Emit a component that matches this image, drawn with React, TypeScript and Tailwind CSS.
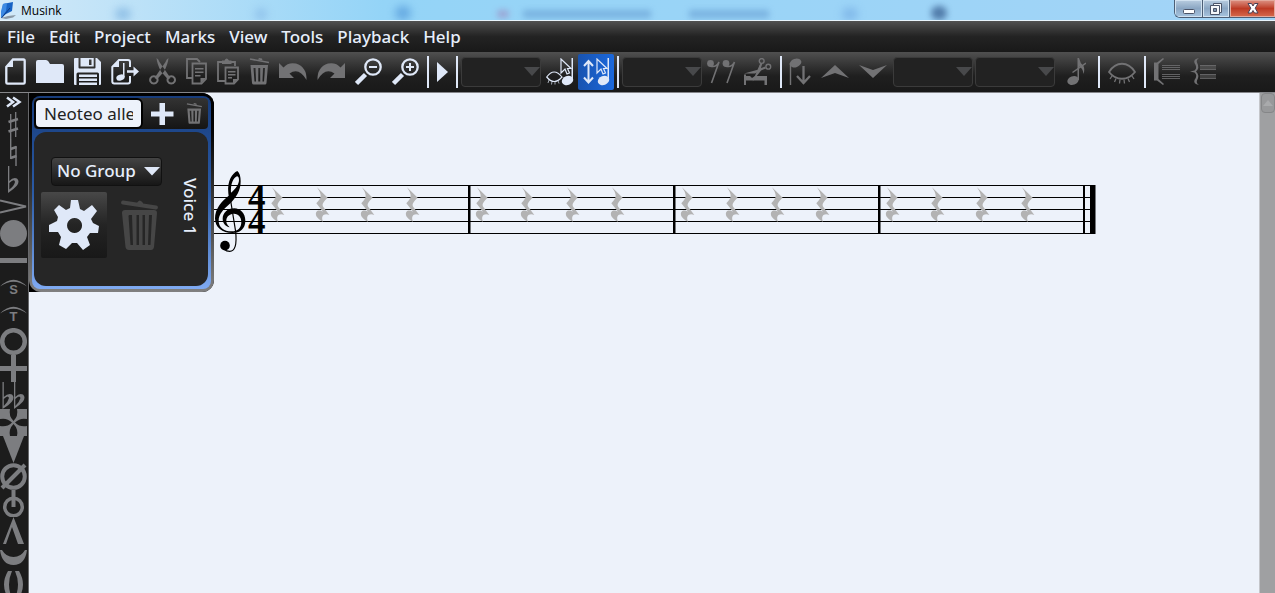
import { useState } from "react";
import type { ReactNode } from "react";
import clsx from "clsx";

const MENUS = ["File", "Edit", "Project", "Marks", "View", "Tools", "Playback", "Help"];

const REST_STARTS = [270, 475, 680, 885];
const REST_OFFSETS = [0, 45, 90, 135];
const STAFF_LINES = [185, 197, 209, 221, 233];

type ToolButtonProps = {
  label: string;
  width: number;
  disabled?: boolean;
  children: ReactNode;
};

const ToolButton = ({ label, width, disabled, children }: ToolButtonProps) => (
  <button
    type="button"
    aria-label={label}
    disabled={disabled}
    className={clsx("shrink-0", disabled ? "text-[#727274]" : "text-[#dfe8f8]")}
  >
    <svg width={width} height="28" viewBox={`0 0 ${width} 28`} fill="currentColor">
      {children}
    </svg>
  </button>
);

const Separator = ({ className }: { className?: string }) => (
  <span className={clsx("h-8 w-0.5 shrink-0 bg-[#dfe8f8]", className)} />
);

const ToolSelect = ({ label }: { label: string }) => (
  <div className="relative h-[30px] w-20 shrink-0">
    <select
      aria-label={label}
      disabled
      className="h-full w-full appearance-none rounded-sm border border-[#3b3b3b] bg-[#222222]"
    />
    <svg
      width="16"
      height="10"
      viewBox="0 0 16 10"
      className="pointer-events-none absolute top-2.5 right-px fill-[#48494b]"
    >
      <path d="M0 0H16L8 9Z" />
    </svg>
  </div>
);

const TrashShape = () => (
  <>
    <path d="M1 1L20 4.500" stroke="currentColor" strokeWidth="1.600" fill="none" />
    <path d="M9 1.500l1-1.500 3 .5 .5 2z" />
    <path
      fillRule="evenodd"
      d="M1.500 7H19L17.500 25Q17.300 26.500 16 26.500H4.700Q3.200 26.500 3 25ZM4.500 10L5.500 23.500H7L6.500 10ZM9.300 10V23.500H11.200V10ZM14 10L13.500 23.500H15L16 10Z"
    />
  </>
);

const CursorNote = () => (
  <>
    <path d="M1 1V15L5 11L7 16L9.500 15L7.500 10.500H11Z" fill="none" stroke="currentColor" strokeWidth="1.200" />
    <path d="M11.500 0h1.500v22h-1.500z" />
    <ellipse cx="7.500" cy="22.500" rx="5.800" ry="4.500" transform="rotate(-20 7.500 22.500)" />
  </>
);

const Lashes = () => (
  <>
    <path d="M1 14C8 3 20 3 27 14C20 23 8 23 1 14Z" fill="none" stroke="currentColor" strokeWidth="1.800" />
    <path
      d="M4 18L2 21M8 20.500L6.500 24M12 21.500L11.500 25.500M16 21.500L16.500 25.500M20 20.500L21.500 24M24 18L26 21"
      fill="none"
      stroke="currentColor"
      strokeWidth="1.300"
    />
  </>
);

const TitleBar = () => (
  <header className="relative flex h-[21px] shrink-0 items-start justify-between overflow-hidden border-b border-[#e8f4fc] bg-gradient-to-r from-[#d2e9f8] via-[#94d4f7] via-30% to-[#a3d4f7]">
    <div aria-hidden="true" className="absolute inset-0">
      <span className="absolute top-2 left-[9%] h-3 w-4 rounded-full bg-[#6fa8da] opacity-60 blur-[4px]" />
      <span className="absolute top-2 left-[20%] h-3 w-3 rounded-full bg-[#76a8de] opacity-50 blur-[4px]" />
      <span className="absolute top-1.5 left-[31%] h-3.5 w-4 rounded-full bg-[#5197d8] opacity-70 blur-[4px]" />
      <span className="absolute top-2.5 left-[39%] h-2 w-3 rounded-full bg-[#9d8fc4] opacity-70 blur-[3px]" />
      <span className="absolute top-2.5 left-[41%] h-2 w-32 bg-[#6ba3d6] opacity-70 blur-[3px]" />
      <span className="absolute top-2.5 left-[54%] h-2 w-20 bg-[#6ba3d6] opacity-70 blur-[3px]" />
      <span className="absolute top-2 left-[66%] h-3 w-4 rounded-full bg-[#6da5e0] opacity-60 blur-[4px]" />
      <span className="absolute top-1.5 left-[73%] h-3.5 w-4 rounded-full bg-[#3f6798] opacity-80 blur-[3px]" />
    </div>
    <div className="relative flex items-center gap-[5px] pt-0.5">
      <svg width="16" height="17" viewBox="0 0 16 17">
        <path d="M1 16L8 14L16 13L13 15.500L6 17Z" fill="#8b9aa7" />
        <path d="M3 2L13 0L12 9L6 12L1 16Z" fill="#1763c5" />
        <path d="M3 2L7 1L6 9L1 16L1 9Z" fill="#3c8ae4" />
        <path d="M1.500 16L10 6" stroke="#0b3c85" strokeWidth="1" />
      </svg>
      <h1 className="font-['Open_Sans','Noto_Sans',sans-serif] text-xs leading-4 text-black">Musink</h1>
    </div>
    <div className="relative flex h-[18px] overflow-hidden rounded-bl-md border-b border-l border-[#4c5e75]">
      <button
        type="button"
        aria-label="Minimize"
        className="flex w-7 items-center justify-center border-r border-[#4c5e75] bg-gradient-to-b from-[#b9cde0] via-[#8ba6c3] to-[#a7c4df] shadow-[inset_0_0_0_1px_#d2e2f0]"
      >
        <svg width="14" height="16" viewBox="0 0 14 16">
          <rect x="1.500" y="8.500" width="11" height="4" rx="1" fill="#fff" stroke="#4b5468" />
        </svg>
      </button>
      <button
        type="button"
        aria-label="Restore"
        className="flex w-[27px] items-center justify-center border-r border-[#4c5e75] bg-gradient-to-b from-[#b9cde0] via-[#8ba6c3] to-[#a7c4df] shadow-[inset_0_0_0_1px_#d2e2f0]"
      >
        <svg width="14" height="14" viewBox="0 0 14 14" fill="#f5f7fa" stroke="#4b5468">
          <path d="M4.500 1.500H12.500V10.500H4.500Z" />
          <path d="M1.500 3.500H10.500V12.500H1.500Z" />
          <path d="M4.500 6.500H7.500V9.500H4.500Z" fill="#8196af" />
        </svg>
      </button>
      <button
        type="button"
        aria-label="Close"
        className="flex w-[45px] items-center justify-center bg-gradient-to-b from-[#dc9183] via-[#bd3a24] to-[#d66a4d] shadow-[inset_0_0_0_1px_#e3a99c]"
      >
        <svg width="14" height="13" viewBox="0 0 14 13">
          <path
            d="M2 1.500H5.500L7 4L8.500 1.500H12L9.200 6.200L12 11H8.500L7 8.500L5.500 11H2L4.800 6.200Z"
            fill="#fff"
            stroke="#4b4256"
          />
        </svg>
      </button>
    </div>
  </header>
);

const MenuBar = () => (
  <nav className="h-[31px] shrink-0 bg-gradient-to-b from-[#515151] via-[#232323] via-50% to-[#191919]">
    <ul className="flex h-full items-center gap-3.5 pl-[7px]">
      {MENUS.map((item) => (
        <li key={item}>
          <button type="button" className="block text-[17px] leading-6 font-medium">
            {item}
          </button>
        </li>
      ))}
    </ul>
  </nav>
);

const Toolbar = () => (
  <div
    role="toolbar"
    aria-label="Main tools"
    className="flex h-[41px] shrink-0 items-center overflow-hidden border-b border-[#85868a] bg-gradient-to-b from-[#505050] via-[#1f1f1f] via-60% to-[#191919] pl-[5px]"
  >
    <div className="flex shrink-0 items-center gap-2.5">
      <ToolButton label="New" width={21}>
        <path d="M8 1.500H18.500Q19.700 1.500 19.700 3V24.500Q19.700 25.700 18.500 25.700H2.500Q1.300 25.700 1.300 24.500V9Z" fill="none" stroke="currentColor" strokeWidth="2.300" />
        <path d="M8 1V9H1Z" />
      </ToolButton>
      <ToolButton label="Open" width={28}>
        <path d="M0 4Q0 2 2 2H10Q11.500 2 12.500 3.500L14 6H26Q28 6 28 8V25H0Z" />
      </ToolButton>
      <ToolButton label="Save" width={27}>
        <path
          fillRule="evenodd"
          d="M1 0H4.500V9.500Q4.500 10.500 5.500 10.500H20.500Q21.500 10.500 21.500 9.500V0H23L27 4V26Q27 27 26 27H25V16Q25 14.500 23.500 14.500H4Q2.500 14.500 2.500 16V27H1Q0 27 0 26V1Q0 0 1 0ZM6.500 0H19.700V8.500H6.500ZM15 1.500V7H17.500V1.500Z"
        />
        <path d="M5 16.500H23V19H5ZM5 20.500H23V23H5ZM5 24.500H23V27H5Z" />
      </ToolButton>
      <ToolButton label="Export" width={28}>
        <path d="M19 9V4Q19 2 17 2H8L1.300 9V23.500Q1.300 25.500 3.300 25.500H17Q19 25.500 19 23.500V18" fill="none" stroke="currentColor" strokeWidth="2" />
        <path d="M1 9L8 1.500V9Z" />
        <path d="M12 5H13.500V19H12Z" />
        <ellipse cx="9.500" cy="19.500" rx="4.300" ry="3" transform="rotate(-20 9.500 19.500)" />
        <path d="M16 12.300H22.500V8.500L28 13.500L22.500 18.500V14.800H16Z" />
      </ToolButton>
      <ToolButton label="Cut" width={27} disabled>
        <path d="M7.500 0Q9.500 1 10.500 4L21.500 20L19 21.500L12 13.500Q8 6 7.500 0ZM19.500 0Q17.500 1 16.500 4L5.500 20L8 21.500L15 13.500Q19 6 19.500 0Z" />
        <path d="M4.800 18.200a3.700 3.700 0 1 0 .1 0ZM22.200 18.200a3.700 3.700 0 1 0 .1 0Z" fill="none" stroke="currentColor" strokeWidth="2" />
      </ToolButton>
      <ToolButton label="Copy" width={21} disabled>
        <path d="M6 20H1V1H11L14 4" fill="none" stroke="currentColor" strokeWidth="1.800" />
        <path d="M6.500 5.500H20V21L15.500 25.500H6.500Z" fill="none" stroke="currentColor" strokeWidth="1.800" />
        <path d="M9 10H17.500V11.500H9ZM9 13.500H17.500V15H9ZM9 17H14.500V18.500H9ZM14.500 20H20L14.500 25.500Z" />
      </ToolButton>
      <ToolButton label="Paste" width={22} disabled>
        <path d="M8 23H1V4H18V8" fill="none" stroke="currentColor" strokeWidth="1.800" />
        <path d="M5 2.500H7.500Q9.500-1.500 12 2.500H14.500V6H5Z" />
        <path d="M8.500 9.500H21V21.500L17 25.500H8.500Z" fill="none" stroke="currentColor" strokeWidth="1.800" />
        <path d="M11 13H18.500V14.500H11ZM11 16H18.500V17.500H11ZM11 19H15V20.500H11ZM16 21H21L16 25.500Z" />
      </ToolButton>
      <ToolButton label="Delete" width={20} disabled>
        <TrashShape />
      </ToolButton>
      <ToolButton label="Undo" width={28} disabled>
        <path d="M0 5V20H15L10.500 15.500Q20 9 27.500 22Q28 9 17 5.500Q9 4 4.500 9.500Z" />
      </ToolButton>
      <ToolButton label="Redo" width={28} disabled>
        <path d="M28 5V20H13L17.500 15.500Q8 9 .5 22Q0 9 11 5.500Q19 4 23.500 9.500Z" />
      </ToolButton>
      <ToolButton label="Zoom out" width={27}>
        <circle cx="18" cy="9" r="7.700" fill="none" stroke="currentColor" strokeWidth="2.300" />
        <path d="M14 8H22V10H14Z" />
        <path d="M1.500 25.500L10.500 16.500" stroke="currentColor" strokeWidth="4.500" />
      </ToolButton>
      <ToolButton label="Zoom in" width={27}>
        <circle cx="18" cy="9" r="7.700" fill="none" stroke="currentColor" strokeWidth="2.300" />
        <path d="M14 8H17V5H19V8H22V10H19V13H17V10H14Z" />
        <path d="M1.500 25.500L10.500 16.500" stroke="currentColor" strokeWidth="4.500" />
      </ToolButton>
    </div>
    <Separator className="mx-2" />
    <ToolButton label="Play" width={11}>
      <path d="M0 4L11 14L0 24Z" />
    </ToolButton>
    <Separator className="mr-[3px] ml-2" />
    <ToolSelect label="Voice" />
    <div className="mr-[3px] ml-[5px] flex shrink-0 items-center gap-1">
      <ToolButton label="Select hidden notes" width={28}>
        <g transform="translate(14 0)">
          <CursorNote />
        </g>
        <path d="M.7 19Q8 9 16 19Q8 28 .7 19Z" fill="none" stroke="currentColor" strokeWidth="1.200" />
        <path d="M3 22L2 25M6 23.500L5.500 26.500M9 23.500V26.500M12 22.500L13 25.500" fill="none" stroke="currentColor" strokeWidth=".7" />
      </ToolButton>
      <button
        type="button"
        aria-label="Move notes"
        aria-pressed="true"
        className="flex h-9 w-9 shrink-0 items-center justify-center rounded-xs bg-gradient-to-r from-[#1853b0] to-[#1b68dc] text-[#dfe8f8]"
      >
        <svg width="28" height="28" viewBox="0 0 28 28" fill="currentColor">
          <path d="M6.500 4V23M2 8L6.500 3L11 8M2 19.500L6.500 24.500L11 19.500" fill="none" stroke="currentColor" strokeWidth="2" />
          <g transform="translate(14 0)">
            <CursorNote />
          </g>
        </svg>
      </button>
    </div>
    <Separator className="mr-[3px]" />
    <ToolSelect label="Duration" />
    <div className="mr-2 ml-[5px] flex shrink-0 items-center gap-2">
      <ToolButton label="Split rests" width={29} disabled>
        <circle cx="3.500" cy="5.500" r="3.400" />
        <circle cx="19" cy="5.500" r="3.400" />
        <path d="M3 8Q9 10 12 4L4.500 25M18.500 8Q24.500 10 27.500 4L20 25" fill="none" stroke="currentColor" strokeWidth="1.600" />
      </ToolButton>
      <ToolButton label="Cut beam" width={28} disabled>
        <path d="M0 16.500H2V18H6L8 20L11 18H23V27H20.500V22.500H2V27H0Z" />
        <path d="M16.500 5L8.500 23.500L17.500 12Z" />
        <path d="M21.500 9.500L0 15.500L11 15.500Z" />
        <path d="M17.500 5.500L15 12L21.500 9.500" fill="none" stroke="currentColor" strokeWidth="2" />
        <circle cx="17.700" cy="3" r="2.400" fill="none" stroke="currentColor" strokeWidth="1.400" />
        <circle cx="24.300" cy="8.700" r="2.400" fill="none" stroke="currentColor" strokeWidth="1.400" />
      </ToolButton>
    </div>
    <Separator />
    <div className="mr-1.5 ml-[7px] flex shrink-0 items-center gap-2.5">
      <ToolButton label="Flip stem" width={22} disabled>
        <ellipse cx="6.500" cy="5" rx="6" ry="4.200" transform="rotate(-20 6.500 5)" />
        <path d="M.8 5H2.200V27H.8Z" />
        <path d="M14.500 8V25M8 18L14.500 25L21 18" fill="none" stroke="currentColor" strokeWidth="2.300" />
      </ToolButton>
      <ToolButton label="Move up" width={28} disabled>
        <path d="M0 20L14 7L28 20L14 15Z" />
      </ToolButton>
      <ToolButton label="Move down" width={28} disabled>
        <path d="M0 7L14 12L28 7L14 20Z" />
      </ToolButton>
    </div>
    <div className="flex shrink-0 gap-0.5">
      <ToolSelect label="Clef" />
      <ToolSelect label="Key" />
    </div>
    <div className="mx-3 flex shrink-0">
      <ToolButton label="Grace note" width={19} disabled>
        <ellipse cx="6" cy="22.500" rx="5.800" ry="4.200" transform="rotate(-20 6 22.500)" />
        <path d="M10.500 0H12Q13 5 16.500 8Q18 11 16.500 16Q16 10 12 8.500V22H10.500Z" />
        <path d="M5.500 14.500L19 5" stroke="currentColor" strokeWidth="1.500" />
      </ToolButton>
    </div>
    <Separator className="mr-2" />
    <ToolButton label="Hide" width={28} disabled>
      <Lashes />
    </ToolButton>
    <Separator className="mx-2" />
    <div className="flex shrink-0 gap-2.5">
      <ToolButton label="Bracket" width={26} disabled>
        <path d="M0 4.500H3L9 0L10 1L4.500 6V21L10 26L9 27L3 22.500H0Z" />
        <path d="M8 7.500H26M8 9.500H26M8 11.500H26M8 16.500H26M8 18.500H26M8 20.500H26" stroke="currentColor" strokeWidth="1" className="opacity-80" />
      </ToolButton>
      <ToolButton label="Brace" width={27} disabled>
        <path d="M9 0Q3 1 4.500 5Q8 10 4.500 12.500L0 13.500L4.500 14.500Q8 17 4.500 22Q3 26 9 27Q6 25 7 22.500Q10 17 6 13.500Q10 10 7 4.500Q6 2 9 0Z" />
        <path d="M10 7H26V11.500H10ZM10 16H26V20.500H10Z" className="opacity-40" />
        <path d="M10 7.500H26M10 11.500H26M10 16.500H26M10 20.500H26" stroke="currentColor" strokeWidth="1" className="opacity-70" />
      </ToolButton>
    </div>
  </div>
);

type Mark = { name: string; shape: ReactNode };

const MARKS: Mark[] = [
  {
    name: "Sharp",
    shape: (
      <>
        <path d="M10.700 2V27M15.700 0V25" stroke="currentColor" strokeWidth="1.300" />
        <path d="M8.500 10L18 7M8.500 19.500L18 16.500" stroke="currentColor" strokeWidth="2.600" />
      </>
    ),
  },
  {
    name: "Natural",
    shape: (
      <>
        <path d="M10.700 0V20M16 7V27" stroke="currentColor" strokeWidth="1.400" />
        <path d="M10.500 10L16.500 8M10.500 19L16.500 17" stroke="currentColor" strokeWidth="2.800" />
      </>
    ),
  },
  {
    name: "Flat",
    shape: (
      <path
        fillRule="evenodd"
        d="M8 0H9.300V15Q13 11 17 12.500Q20 15 17 19.500Q14 23 8 27ZM9.300 17V23.500Q14 20 15 16Q14.500 12 9.300 17Z"
      />
    ),
  },
  { name: "Accent", shape: <path d="M0 7.500L26 13.500L0 19.500" fill="none" stroke="currentColor" strokeWidth="1.800" /> },
  { name: "Notehead", shape: <circle cx="13.500" cy="13.500" r="13.500" /> },
  { name: "Tenuto", shape: <path d="M0 11H27V16H0Z" /> },
  {
    name: "Short fermata",
    shape: (
      <>
        <path d="M0 12.500Q13.500-1 27 12.500Q13.500 3 0 12.500Z" />
        <text x="13.500" y="20" textAnchor="middle" className="font-['Liberation_Sans',sans-serif] text-[13px] font-bold">S</text>
      </>
    ),
  },
  {
    name: "Turn fermata",
    shape: (
      <>
        <path d="M0 12.500Q13.500-1 27 12.500Q13.500 3 0 12.500Z" />
        <text x="13.500" y="20" textAnchor="middle" className="font-['Liberation_Sans',sans-serif] text-[13px] font-bold">T</text>
      </>
    ),
  },
  { name: "Harmonic", shape: <circle cx="13.500" cy="13.500" r="11.300" fill="none" stroke="currentColor" strokeWidth="4.500" /> },
  { name: "Stopped", shape: <path d="M11 0H16V11H27V16H16V27H11V16H0V11H11Z" /> },
  {
    name: "Double flat",
    shape: (
      <path
        fillRule="evenodd"
        d="M2.500 0H3.800V15Q8 11 12 12.500Q15 15 12 19.500Q9 23 2.500 27ZM3.800 17V24Q8 20 9 16Q8 12.500 3.800 17ZM14 0H15.300V15Q19 11 23 12.500Q26 15 23 19.500Q20 23 14 27ZM15.300 17V24Q19.500 20 20.500 16Q19.500 12.500 15.300 17Z"
      />
    ),
  },
  {
    name: "Double sharp",
    shape: (
      <path d="M0 0H10Q8.500 7 13.500 12Q18.500 7 17 0H27V10Q20 8.500 15 13.500Q20 18.500 27 17V27H17Q18.500 20 13.500 15Q8.500 20 10 27H0V17Q7 18.500 12 13.500Q7 8.500 0 10Z" />
    ),
  },
  { name: "Staccatissimo", shape: <path d="M3 0H24L13.500 27Z" /> },
  {
    name: "Half open",
    shape: (
      <>
        <circle cx="13.500" cy="13.500" r="11.300" fill="none" stroke="currentColor" strokeWidth="4" />
        <path d="M2 25L25 2" stroke="currentColor" strokeWidth="4" />
      </>
    ),
  },
  {
    name: "Snap pizzicato",
    shape: (
      <>
        <circle cx="13.500" cy="17" r="8.800" fill="none" stroke="currentColor" strokeWidth="3.500" />
        <path d="M11.500 0H15.500V17H11.500Z" />
      </>
    ),
  },
  { name: "Marcato", shape: <path d="M13.500 0L24 27H18L12 10L6 27H3Z" /> },
  { name: "Down bow", shape: <path d="M0 6H2Q6 13 13.500 13Q21 13 25 6H27Q25 21 13.500 21Q2 21 0 6Z" /> },
  {
    name: "Parentheses",
    shape: <path d="M8 0H12Q6 13.500 12 27H8Q0 13.500 8 0ZM19 0H15Q21 13.500 15 27H19Q27 13.500 19 0Z" />,
  },
];

const MarksSidebar = () => (
  <aside
    aria-label="Marks palette"
    className="flex w-[29px] shrink-0 flex-col items-start overflow-hidden border-r border-[#68696c] bg-[#1c1c1c] text-[#7c7d80]"
  >
    <button type="button" aria-label="Expand palette" className="shrink-0 text-[#dfe8f8]">
      <svg width="27" height="19" viewBox="0 0 27 19" fill="none" stroke="currentColor" strokeWidth="2.500">
        <path d="M7 4.500L13 9L7 13.500M13 4.500L19.500 9L13 13.500" />
      </svg>
    </button>
    {MARKS.map((mark) => (
      <button key={mark.name} type="button" aria-label={mark.name} className="shrink-0">
        <svg width="27" height="27" viewBox="0 0 27 27" fill="currentColor">
          {mark.shape}
        </svg>
      </button>
    ))}
  </aside>
);

const StaffPanel = () => {
  const [name, setName] = useState("Neoteo alle");

  return (
    <section
      aria-label="Staff settings"
      className="w-[185px] shrink-0 rounded-r-xl bg-gradient-to-b from-black via-[#1c1c1c] via-20% to-black"
    >
      <div className="rounded-r-xl rounded-bl-xl bg-gradient-to-b from-black via-[#333333] to-[#808080] p-[3px]">
        <div className="flex flex-col gap-[3px] rounded-lg bg-gradient-to-b from-[#173c7c] via-[#2b5ba6] to-[#7faaf2] pt-0.5 pr-[3px] pb-[3px] pl-0.5">
          <div className="flex h-[31px] items-center rounded-sm bg-gradient-to-b from-[#333333] to-[#151515]">
            <input
              aria-label="Staff name"
              value={name}
              onChange={(event) => setName(event.target.value)}
              className="h-[31px] w-[109px] rounded-md border-2 border-black bg-[#edf2fb] px-2 text-[17px] leading-6 text-[#222222]"
            />
            <button type="button" aria-label="Add voice" className="ml-2 text-[#dfe8f8]">
              <svg width="23" height="22" viewBox="0 0 23 22" fill="currentColor">
                <path d="M8.500 0H14V8.500H22.500V13.500H14V22H8.500V13.500H0V8.500H8.500Z" />
              </svg>
            </button>
            <button type="button" aria-label="Delete staff" className="ml-3 text-[#727274]">
              <svg width="16" height="22" viewBox="0 0 20 28" fill="currentColor">
                <TrashShape />
              </svg>
            </button>
          </div>
          <div className="flex h-[154px] items-center rounded-xl bg-[#262626] pr-1.5 pb-1 pl-[7px]">
            <div className="flex flex-col gap-1.5">
              <div className="relative ml-2.5 h-[29px] w-[111px]">
                <select
                  aria-label="Group"
                  className="h-full w-full appearance-none rounded-sm border border-[#111111] bg-gradient-to-b from-[#444444] to-[#171717] pl-[5px] text-[17px] leading-6 font-medium"
                >
                  <option>No Group</option>
                </select>
                <svg
                  width="16"
                  height="9"
                  viewBox="0 0 16 9"
                  className="pointer-events-none absolute top-2.5 right-0.5 fill-[#dfe8f8]"
                >
                  <path d="M0 0H16L8 8.500Z" />
                </svg>
              </div>
              <div className="flex items-center gap-3.5">
                <button
                  type="button"
                  aria-label="Voice settings"
                  className="flex size-[66px] items-center justify-center rounded-xs bg-gradient-to-b from-[#484848] via-[#242424] to-[#181818] text-[#dfe8f8]"
                >
                  <svg width="52" height="52" viewBox="0 0 52 52" fill="currentColor">
                    <path
                      fillRule="evenodd"
                      d="M23 1H30L32 10L36 12L44 6L49 12L43 20L45 24L51 27L50 34L42 34L39 38L42 46L35 51L29 44H24L18 50L11 46L13 38L10 33L1 33L1 26L9 22L10 18L6 11L11 6L18 11L22 9ZM26.500 19a7.500 7.500 0 1 0 .1 0Z"
                    />
                  </svg>
                </button>
                <button type="button" aria-label="Delete voice" disabled className="text-[#464646]">
                  <svg width="37" height="52" viewBox="0 0 37 52" fill="currentColor">
                    <path d="M2 3.500L35 8.500" stroke="currentColor" strokeWidth="3.800" strokeLinecap="round" />
                    <path d="M16 4Q18.500-1 22 4V6L16 5Z" />
                    <path
                      fillRule="evenodd"
                      d="M4 11H33Q36 11 36 14L33 48Q32.500 51 30 51H8Q5 51 4.500 48L1 14Q1 11 4 11ZM7.500 17L9.500 46H12L11 16H8ZM15.500 16V46H18V16ZM21.500 16V46H24V16ZM28 16L27 46H29.500L31 16Z"
                    />
                  </svg>
                </button>
              </div>
            </div>
            <span className="ml-auto text-[17px] leading-6 font-medium [writing-mode:vertical-rl]">Voice 1</span>
          </div>
        </div>
      </div>
    </section>
  );
};

const Score = () => (
  <svg
    role="img"
    aria-label="Staff in four four time"
    width="882"
    height="95"
    viewBox="214 165 882 95"
    className="mt-[72px] shrink-0"
  >
    {STAFF_LINES.map((y) => (
      <rect key={y} x="214" y={y} width="881" height="1" />
    ))}
    <g transform="translate(205 160) scale(.3333)">
      <path
        fillRule="evenodd"
        d="M97 33C82 40 66 62 70 100L71 107C50 124 30 146 30 175C30 203 52 219 82 219C106 219 121 205 121 182C121 160 106 145 88 145C66 145 53 160 53 176C53 190 62 199 74 202C66 195 63 188 64 180C65 168 76 161 87 161C101 161 109 172 109 186C109 204 98 214 80 214C56 214 41 202 41 182C41 162 56 148 76 130C94 112 107 92 107 64C107 50 104 38 97 33ZM96 49C86 52 76 72 78 98C93 86 102 72 102 60C102 54 100 49 96 49Z"
      />
      <path d="M74 104L92 215Q98 274 74 274Q64 274 58 268" fill="none" stroke="#000" strokeWidth="3.500" />
      <circle cx="60" cy="257" r="14.500" />
    </g>
    <g className="font-['Liberation_Serif',serif] text-[35px] font-bold">
      <text x="248" y="209">4</text>
      <text x="248" y="233">4</text>
    </g>
    {REST_STARTS.map((start) =>
      REST_OFFSETS.map((offset) => (
        <path
          key={start + offset}
          transform={`translate(${start + offset - 65} 160) scale(.3333)`}
          fill="#b3b3b3"
          d="M201 82L233 113C222 124 214 132 220 141L238 165C224 158 211 166 219 185C207 179 195 169 198 158C201 149 212 151 219 155L199 130C208 120 213 114 212 105C211 98 207 91 201 82Z"
        />
      )),
    )}
    <path d="M468 185H470.500V234H468ZM673 185H675.500V234H673ZM878 185H880.500V234H878ZM1083 185H1085V234H1083ZM1090 185H1095.500V234H1090Z" />
  </svg>
);

const ScrollRail = () => (
  <div className="ml-auto w-4 shrink-0 border-l border-[#c4c6ca] bg-[#9fa0a2] pl-px">
    <button
      type="button"
      aria-label="Scroll up"
      className="flex h-5 w-full items-center justify-center rounded-sm border border-[#858688] bg-[#98999b]"
    >
      <svg width="10" height="6" viewBox="0 0 10 6" fill="#a9aaac">
        <path d="M5 0L10 6H0Z" />
      </svg>
    </button>
  </div>
);

export default function App() {
  return (
    <div className="flex h-screen flex-col overflow-hidden bg-[#edf2fa] font-['Noto_Sans','Open_Sans',sans-serif] text-[#e6eefb]">
      <TitleBar />
      <MenuBar />
      <Toolbar />
      <div className="flex min-h-0 flex-1">
        <MarksSidebar />
        <main className="flex min-w-0 flex-1 items-start overflow-hidden">
          <StaffPanel />
          <Score />
        </main>
        <ScrollRail />
      </div>
    </div>
  );
}
